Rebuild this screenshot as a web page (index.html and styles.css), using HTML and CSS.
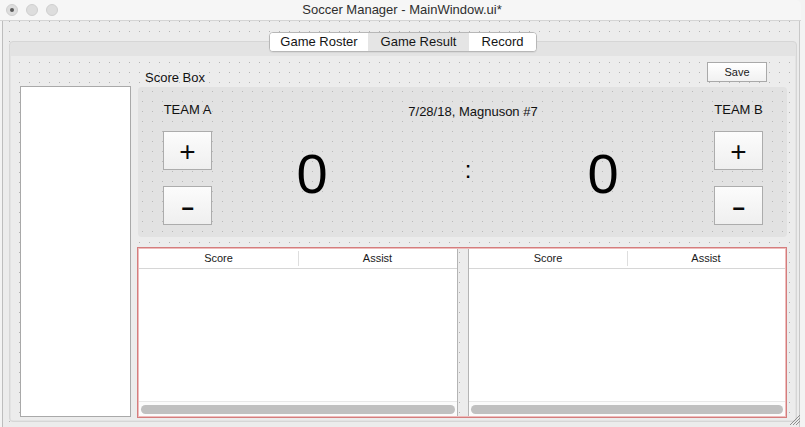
FILE: index.html
```html
<!DOCTYPE html>
<html>
<head>
<meta charset="utf-8">
<title>Soccer Manager - MainWindow.ui*</title>
<link rel="stylesheet" href="styles.css">
</head>
<body>
<div class="window">
  <div class="titlebar">
    <div class="lights">
      <span class="light light-dot"></span>
      <span class="light"></span>
      <span class="light"></span>
    </div>
    <div class="title">Soccer Manager - MainWindow.ui*</div>
    <div></div>
  </div>
  <div class="central">
    <div class="tabs">
      <div class="segmented">
        <span class="tab tab-roster">Game Roster</span>
        <span class="tab tab-result">Game Result</span>
        <span class="tab tab-record">Record</span>
      </div>
    </div>
    <div class="pane">
      <div class="page">
        <div class="list"></div>
        <div class="main">
          <div class="toprow">
            <span class="caption">Score Box</span>
            <button class="save">Save</button>
          </div>
          <div class="scorebox">
            <div class="team">
              <div class="team-name">TEAM A</div>
              <button class="pm pm-plus">+</button>
              <button class="pm pm-minus"><span class="minus">-</span></button>
            </div>
            <div class="middle">
              <div class="date">7/28/18, Magnuson #7</div>
              <div class="scores">
                <span class="score">0</span>
                <span class="colon">:</span>
                <span class="score">0</span>
              </div>
            </div>
            <div class="team">
              <div class="team-name">TEAM B</div>
              <button class="pm pm-plus">+</button>
              <button class="pm pm-minus"><span class="minus">-</span></button>
            </div>
          </div>
          <div class="tables">
            <div class="table table-left">
              <div class="thead"><span class="hcell">Score</span><span class="hcell hcell-sep">Assist</span></div>
              <div class="tbody"></div>
              <div class="hscroll"><div class="thumb"></div></div>
            </div>
            <div class="splitter"></div>
            <div class="table table-right">
              <div class="thead"><span class="hcell">Score</span><span class="hcell hcell-sep">Assist</span></div>
              <div class="tbody"></div>
              <div class="hscroll"><div class="thumb"></div></div>
            </div>
          </div>
        </div>
      </div>
    </div>
  </div>
  <svg class="grip" width="12" height="12" viewBox="0 0 12 12">
    <line x1="1" y1="11" x2="11" y2="1" stroke="#8f8f8f" stroke-width="1"/>
    <line x1="4" y1="11" x2="11" y2="4" stroke="#8f8f8f" stroke-width="1"/>
    <line x1="7" y1="11" x2="11" y2="7" stroke="#8f8f8f" stroke-width="1"/>
  </svg>
</div>
</body>
</html>
```
FILE: styles.css
```css
* { box-sizing: border-box; margin: 0; padding: 0; }
html, body { width: 805px; height: 427px; overflow: hidden; }
body {
  background: #f3f3f3;
  font-family: "Liberation Sans", Arial, sans-serif;
  color: #1a1a1a;
}
.window {
  position: relative;
  width: 805px;
  height: 427px;
  display: flex;
  flex-direction: column;
}
.titlebar {
  flex: none;
  height: 21px;
  margin-right: 4px;
  background: #f6f6f6;
  border-bottom: 1px solid #d4d4d4;
  border-top-right-radius: 5px;
  display: grid;
  grid-template-columns: 1fr auto 1fr;
  align-items: center;
}
.lights { display: flex; gap: 8px; padding-left: 6px; }
.light {
  width: 12px; height: 12px; border-radius: 50%;
  background: #dddddd; border: 1px solid #cfcfcf;
  display: flex; align-items: center; justify-content: center;
}
.light-dot::after {
  content: ""; width: 4px; height: 4px; border-radius: 50%; background: #595959;
}
.title { font-size: 13px; color: #2e2e2e; line-height: 16px; padding-left: 3px; }

.central {
  flex: 1;
  margin-left: 2px;
  margin-right: 5px;
  border-left: 1px solid #bdbdbd;
  border-right: 1px solid #c8c8c8;
  padding: 11px 2px 0 6px;
  background-color: #ececec;
  background-image: conic-gradient(at 1px 1px, transparent 75%, #b4b4b4 0);
  background-size: 10px 10px;
  background-position: 6px 0px;
}
.tabs {
  position: relative;
  z-index: 1;
  height: 20px;
  display: flex;
  justify-content: center;
}
.segmented {
  display: flex;
  border: 1px solid #b7b7b7;
  border-radius: 4px;
  overflow: hidden;
  box-shadow: 0 1px 1px rgba(0,0,0,0.06);
  background: #fff;
}
.tab {
  font-size: 13px;
  line-height: 18px;
  text-align: center;
  color: #151515;
  background: #ffffff;
}
.tab-roster { width: 98px; }
.tab-result { width: 101px; background: #e5e5e5; }
.tab-record { width: 67px; }

.pane {
  margin-top: -11px;
  height: 381px;
  border: 1px solid #d6d6d6;
  border-radius: 4px;
  background: #e3e3e3;
  padding: 14px 1px 1px 1px;
}
.page {
  height: 364px;
  display: grid;
  grid-template-columns: 111px 650px;
  column-gap: 6px;
  padding: 6px 8px 2px 9px;
  background-color: #ececec;
  background-image: conic-gradient(at 1px 1px, transparent 75%, #b4b4b4 0);
  background-size: 10px 10px;
  background-position: 8px 6px;
}
.list {
  margin-top: 24px;
  margin-bottom: 1px;
  background: #fff;
  border: 1px solid #a9a9a9;
}
.main { display: flex; flex-direction: column; }
.toprow {
  height: 25px;
  flex: none;
  display: flex;
  justify-content: space-between;
}
.caption {
  align-self: flex-end;
  margin-left: 8px;
  margin-bottom: 1px;
  font-size: 13px;
  line-height: 16px;
  color: #111;
}
.save {
  align-self: flex-start;
  width: 60px;
  height: 20px;
  margin-right: 20px;
  border: 1px solid #a9a9a9;
  background: linear-gradient(#ffffff, #f1f1f1);
  font-family: "Liberation Sans", Arial, sans-serif;
  font-size: 11px;
  color: #1a1a1a;
}
.scorebox {
  flex: none;
  height: 150px;
  margin-left: 1px;
  display: flex;
  padding: 0 24px 0 25px;
  border-radius: 4px;
  background-color: #e2e2e2;
  background-image: conic-gradient(at 1px 1px, transparent 75%, #b9b9b9 0);
  background-size: 10px 10px;
  background-position: 4px 4px;
}
.team {
  width: 49px;
  display: flex;
  flex-direction: column;
  align-items: center;
}
.team-name {
  margin-top: 15px;
  font-size: 13px;
  line-height: 16px;
  white-space: nowrap;
  color: #111;
}
.pm {
  width: 49px;
  height: 39px;
  border: 1px solid #acacac;
  background: linear-gradient(#fcfcfc, #efefef);
  font-family: "Liberation Sans", Arial, sans-serif;
  font-size: 28px;
  line-height: 34px;
  padding-top: 2px;
  color: #0a0a0a;
}
.pm-plus { margin-top: 13px; }
.pm-minus { margin-top: 16px; }
.minus { display: inline-block; transform: scaleX(1.6) scaleY(1.15); }
.middle { flex: 1; display: flex; flex-direction: column; }
.date {
  margin-top: 17px;
  padding-left: 20px;
  text-align: center;
  font-size: 13px;
  line-height: 16px;
  color: #111;
}
.scores {
  margin-top: 24px;
  display: grid;
  grid-template-columns: 200px 112px 158px;
  align-items: start;
  text-align: center;
}
.score { font-size: 56px; line-height: 60px; color: #000; }
.colon { font-size: 24px; line-height: 52px; color: #000; }

.tables {
  margin-top: 10px;
  flex: 1;
  display: flex;
  border: 1px solid #d47d7d;
  padding: 1px;
  box-shadow: inset 0 0 0 1px #eebcbc;
}
.table {
  display: flex;
  flex-direction: column;
  background: #fff;
}
.table-left { width: 319px; border-right: 1px solid #b4b4b4; }
.table-right { flex: 1; border-left: 1px solid #b4b4b4; }
.splitter { width: 10px; }
.thead {
  height: 20px;
  flex: none;
  display: grid;
  grid-template-columns: 1fr 1fr;
  border-bottom: 1px solid #d6d6d6;
}
.hcell {
  font-size: 11px;
  line-height: 19px;
  text-align: center;
  color: #1a1a1a;
}
.hcell-sep {
  background: linear-gradient(#dedede, #dedede) left center / 1px 15px no-repeat;
}
.tbody { flex: 1; }
.hscroll {
  height: 15px;
  flex: none;
  border-top: 1px solid #e8e8e8;
  background: #fbfbfb;
  padding: 3px 2px 0 2px;
}
.thumb {
  height: 9px;
  border-radius: 5px;
  background: #c0c0c0;
}
.grip {
  position: absolute;
  right: 4px;
  bottom: 1px;
}
```
